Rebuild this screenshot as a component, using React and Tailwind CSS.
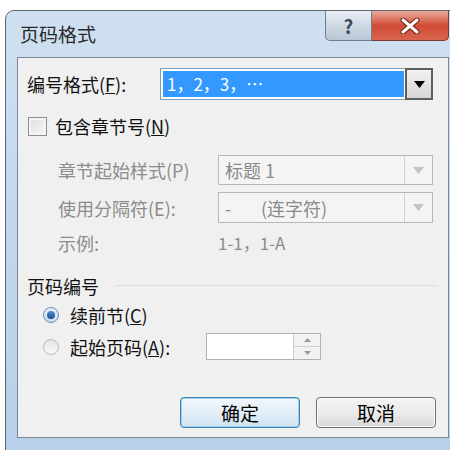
import React from "react";

const F = { fontFamily: '"Noto Sans CJK SC", "Noto Sans", sans-serif' };

function Tri({ color = "#000" }) {
  return (
    <svg width="11" height="7" viewBox="0 0 11 7">
      <path d="M0 0 L11 0 L5.5 7 Z" fill={color} />
    </svg>
  );
}

function Combo({ width, children, active, disabled }) {
  return (
    <div
      className={`flex h-full items-stretch border ${active ? "border-[#7f9db9]" : "border-[#b8b8b8]"} ${disabled ? "bg-[#f4f4f4]" : "bg-white"}`}
      style={{ width }}
    >
      <div className="flex flex-1 items-center p-[2px]">
        <div
          className={`flex h-full w-full items-center pl-[4px] ${active ? "bg-[#3399ff] text-white" : "text-[#8a8a8a]"}`}
        >
          {children}
        </div>
      </div>
      <div
        className={`flex w-[28px] items-center justify-center ${active ? "m-[-1px] border-2 border-[#5e5e5e] bg-gradient-to-b from-[#f2f2f2] to-[#d6d6d6]" : "border-l border-[#d0d0d0] bg-[#f4f4f4]"}`}
      >
        <Tri color={active ? "#000" : "#c4c4c4"} />
      </div>
    </div>
  );
}

function U({ c }) {
  return (
    <span>
      (<span className="underline">{c}</span>)
    </span>
  );
}

export default function App() {
  return (
    <div className="relative h-[450px] w-[450px] overflow-hidden bg-white pl-[5px] pt-[10px]" style={F}>
      <div className="flex h-[445px] w-[447px] flex-col rounded-tl-[9px] border border-[#5b6672] bg-gradient-to-b from-[#cfe0f1] via-[#c2d7ec] to-[#b7cfe8]">
        {/* title bar */}
        <div className="flex h-[46px] items-start justify-between">
          <div className="pl-[14px] pt-[12px] text-[19px] leading-[22px] text-[#2a2a2a]">页码格式</div>
          <div className="mr-[2px] flex">
            <div className="flex h-[30px] w-[47px] items-center justify-center rounded-bl-[5px] border border-t-0 border-[#6f7f90] bg-gradient-to-b from-[#e9eef4] via-[#cfd9e4] to-[#b9c6d4] text-[19px] font-bold leading-none text-[#3b4a5a]">
              ?
            </div>
            <div className="flex h-[30px] w-[77px] items-center justify-center rounded-br-[5px] border border-l-0 border-t-0 border-[#7a3a30] bg-gradient-to-b from-[#e9a99b] via-[#cf4a34] to-[#d9654f]">
              <svg width="20" height="16" viewBox="0 0 20 16">
                <path d="M3 2 L17 14 M17 2 L3 14" stroke="#6b1d12" strokeWidth="5" strokeLinecap="round" />
                <path d="M3 2 L17 14 M17 2 L3 14" stroke="#ffffff" strokeWidth="3" strokeLinecap="round" />
              </svg>
            </div>
          </div>
        </div>
        {/* client */}
        <div className="ml-[11px] mr-[2px] flex h-[381px] flex-col border border-[#7b8794] bg-[#f0f0f0] text-[18px] leading-[22px] text-[#111]">
          <div className="ml-[9px] mt-[10px] flex h-[32px] items-center">
            <div className="w-[133px]">
              编号格式<U c="F" />:
            </div>
            <Combo width="273px" active>
              <span className="text-[17px]">1，2，3，…</span>
            </Combo>
          </div>
          <div className="ml-[10px] mt-[15px] flex h-[22px] items-center">
            <div className="h-[19px] w-[19px] border border-[#8e8f8f] bg-gradient-to-br from-[#dcdcdc] to-[#f8f8f8] shadow-[inset_0_0_0_2px_#f4f4f4]" />
            <div className="ml-[8px]">
              包含章节号<U c="N" />
            </div>
          </div>
          <div className="ml-[40px] mt-[18px] flex h-[30px] items-center text-[#8c8c8c]">
            <div className="w-[160px]">章节起始样式(P)</div>
            <Combo width="215px" disabled>
              标题 1
            </Combo>
          </div>
          <div className="ml-[40px] mt-[7px] flex h-[31px] items-center text-[#8c8c8c]">
            <div className="w-[160px]">使用分隔符(E):</div>
            <Combo width="215px" disabled>
              <span className="w-[36px]">-</span>(连字符)
            </Combo>
          </div>
          <div className="ml-[40px] mt-[10px] flex h-[20px] items-center text-[#8c8c8c]">
            <div className="w-[160px]">示例:</div>
            <div className="text-[17px]">1-1，1-A</div>
          </div>
          <div className="ml-[9px] mr-[10px] mt-[23px] flex h-[20px] items-center">
            <div>页码编号</div>
            <div className="ml-[16px] h-[2px] flex-1 border-t border-[#d5dfe5] border-b-white" />
          </div>
          <div className="ml-[25px] mt-[9px] flex h-[20px] items-center">
            <div className="flex h-[16px] w-[16px] items-center justify-center rounded-full border border-[#6a8fb3] bg-gradient-to-b from-[#e8f2fb] to-[#c6dbef]">
              <div className="h-[8px] w-[8px] rounded-full bg-gradient-to-b from-[#4e8fd0] to-[#1c4f87]" />
            </div>
            <div className="ml-[11px]">
              续前节<U c="C" />
            </div>
          </div>
          <div className="ml-[25px] mt-[8px] flex h-[27px] items-center">
            <div className="h-[16px] w-[16px] rounded-full border border-[#b6bcc2] bg-gradient-to-b from-[#e4e6e8] to-[#f7f7f7]" />
            <div className="ml-[11px] w-[136px]">
              起始页码<U c="A" />:
            </div>
            <div className="flex h-full w-[115px] border border-[#adb2b5] bg-white">
              <div className="flex-1" />
              <div className="flex w-[27px] flex-col border-l border-[#d0d0d0] bg-[#f2f2f2]">
                <div className="flex flex-1 items-center justify-center border-b border-[#d0d0d0]">
                  <svg width="7" height="4" viewBox="0 0 7 4"><path d="M0 4 L7 4 L3.5 0 Z" fill="#9a9a9a" /></svg>
                </div>
                <div className="flex flex-1 items-center justify-center">
                  <svg width="7" height="4" viewBox="0 0 7 4"><path d="M0 0 L7 0 L3.5 4 Z" fill="#9a9a9a" /></svg>
                </div>
              </div>
            </div>
          </div>
          <div className="mr-[12px] mt-[37px] flex h-[31px] justify-end gap-[16px]">
            <div className="flex w-[120px] items-center justify-center rounded-[4px] border border-[#3c7fb1] bg-gradient-to-b from-[#f2f7fb] via-[#e3eef7] to-[#cfe3f2] text-[19px] text-black shadow-[inset_0_0_0_1px_#9fd0ee]">
              确定
            </div>
            <div className="flex w-[120px] items-center justify-center rounded-[4px] border border-[#707070] bg-gradient-to-b from-[#f4f4f4] via-[#ebebeb] to-[#d8d8d8] text-[19px] text-black shadow-[inset_0_0_0_1px_#fcfcfc]">
              取消
            </div>
          </div>
        </div>
      </div>
    </div>
  );
}
